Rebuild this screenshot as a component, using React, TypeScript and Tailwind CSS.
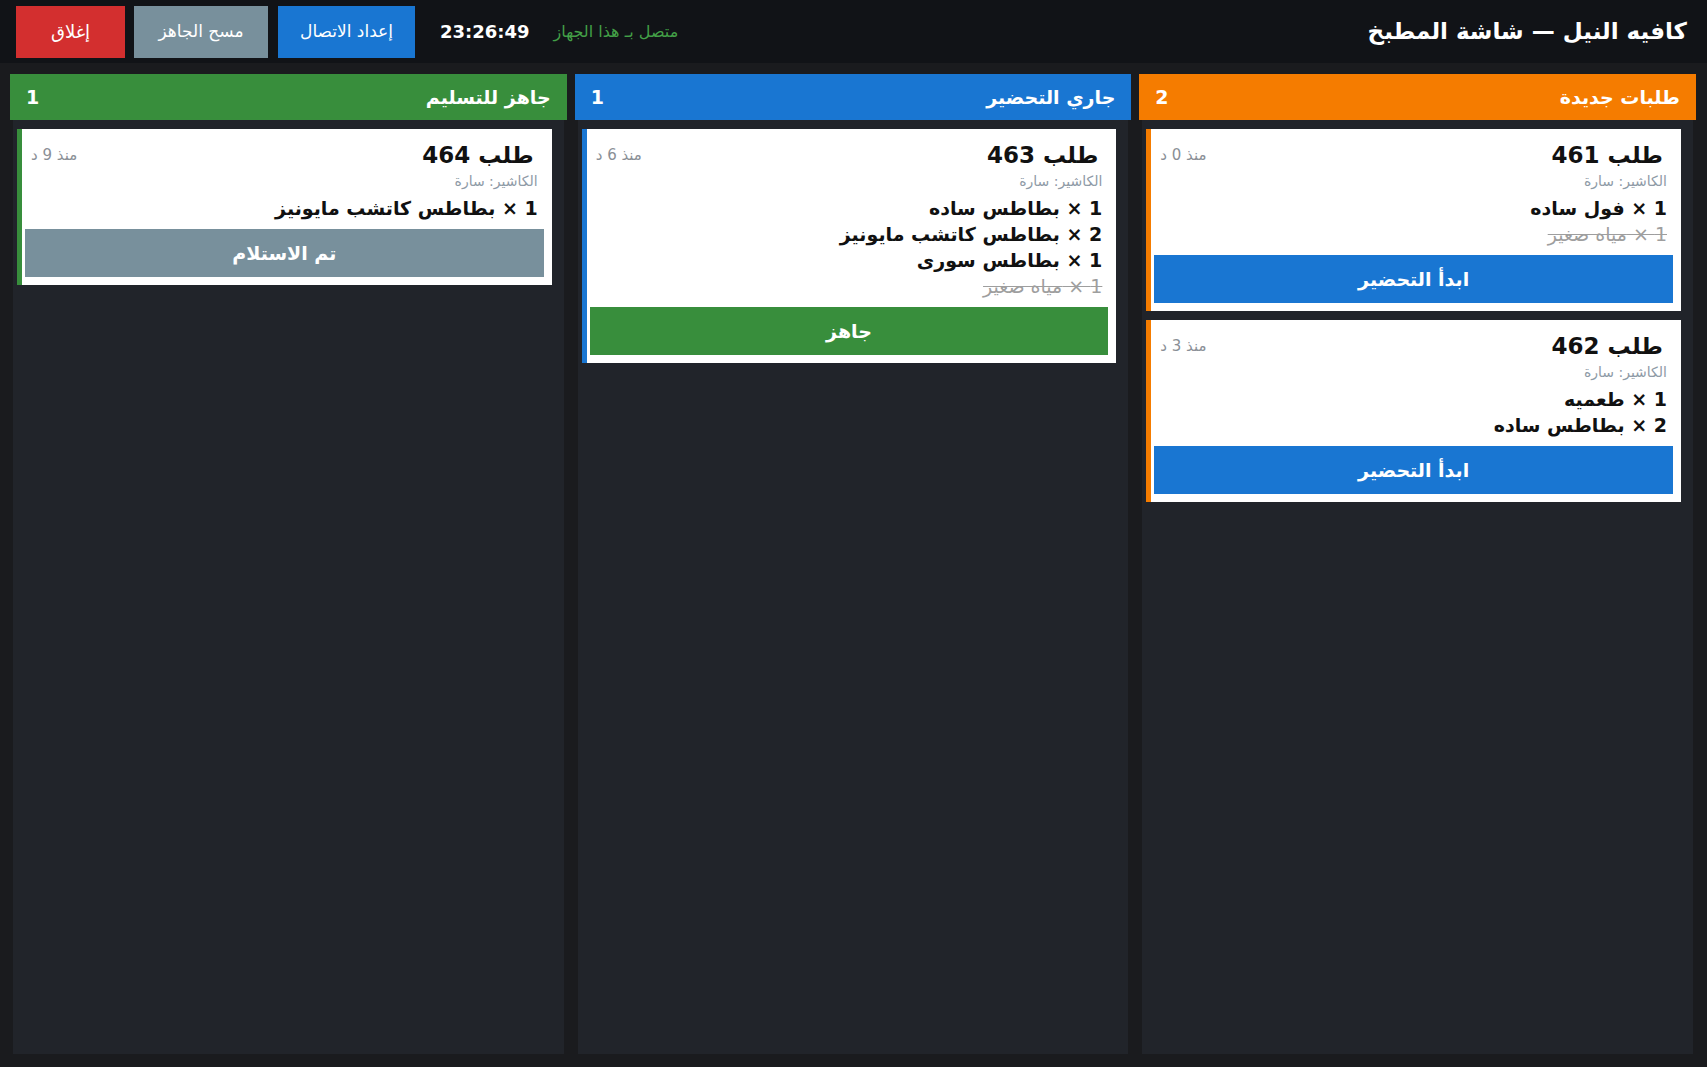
import React from 'react';

type Item = { qty: number; name: string; done?: boolean };
type Order = { no: number; mins: number; cashier: string; items: Item[] };

const columns = [
  {
    title: 'طلبات جديدة',
    bar: 'bg-[#f57c00]',
    edge: 'border-[#f57c00]',
    action: 'ابدأ التحضير',
    btn: 'bg-[#1976d2]',
    orders: [
      {
        no: 461,
        mins: 0,
        cashier: 'سارة',
        items: [
          { qty: 1, name: 'فول ساده' },
          { qty: 1, name: 'مياه صغير', done: true },
        ],
      },
      {
        no: 462,
        mins: 3,
        cashier: 'سارة',
        items: [
          { qty: 1, name: 'طعميه' },
          { qty: 2, name: 'بطاطس ساده' },
        ],
      },
    ] as Order[],
  },
  {
    title: 'جاري التحضير',
    bar: 'bg-[#1976d2]',
    edge: 'border-[#1976d2]',
    action: 'جاهز',
    btn: 'bg-[#388e3c]',
    orders: [
      {
        no: 463,
        mins: 6,
        cashier: 'سارة',
        items: [
          { qty: 1, name: 'بطاطس ساده' },
          { qty: 2, name: 'بطاطس كاتشب مايونيز' },
          { qty: 1, name: 'بطاطس سورى' },
          { qty: 1, name: 'مياه صغير', done: true },
        ],
      },
    ] as Order[],
  },
  {
    title: 'جاهز للتسليم',
    bar: 'bg-[#388e3c]',
    edge: 'border-[#388e3c]',
    action: 'تم الاستلام',
    btn: 'bg-[#78909c]',
    orders: [
      {
        no: 464,
        mins: 9,
        cashier: 'سارة',
        items: [{ qty: 1, name: 'بطاطس كاتشب مايونيز' }],
      },
    ] as Order[],
  },
];

const OrderCard = ({ order, edge, action, btn }: any) => (
  <div className={`bg-white border-l-[5px] ${edge} pt-2 pb-2 pr-2 pl-[3px]`}>
    <div className="px-[6px]">
      <div className="flex items-center justify-between mt-[2px]">
        <div className="text-[23px] leading-[32px] font-bold text-[#111] pr-1">
          طلب {order.no}
        </div>
        <div className="text-[15px] text-[#8a8f96]">منذ {order.mins} د</div>
      </div>
      <div className="text-[14px] leading-[20px] text-[#8e9aa6]">
        الكاشير: {order.cashier}
      </div>
      <div className="mt-1">
        {order.items.map((it: Item, i: number) => (
          <div
            key={i}
            className={
              it.done
                ? 'text-[19px] leading-[26px] text-[#9e9e9e] line-through'
                : 'text-[19px] leading-[26px] font-bold text-[#111]'
            }
          >
            {it.qty} × {it.name}
          </div>
        ))}
      </div>
    </div>
    <button
      type="button"
      className={`${btn} mt-2 w-full h-[48px] text-white text-[19px] font-bold`}
    >
      {action}
    </button>
  </div>
);

export default function App() {
  return (
    <div
      dir="rtl"
      className="h-screen flex flex-col bg-[#1a1b1e] text-white overflow-hidden"
      style={{ fontFamily: '"DejaVu Sans", sans-serif' }}
    >
      <header className="h-[63px] shrink-0 bg-[#111317] flex items-center justify-between pr-5 pl-4">
        <h1 className="text-[23px] font-bold">كافيه النيل — شاشة المطبخ</h1>
        <div className="flex items-center">
          <span className="text-[16px] text-[#43a047] ml-[24px]">متصل بـ هذا الجهاز</span>
          <span className="text-[18px] font-bold ml-[25px]" dir="ltr">
            23:26:49
          </span>
          <button type="button" className="h-[52px] w-[137px] bg-[#1976d2] text-[17px] ml-[10px]">
            إعداد الاتصال
          </button>
          <button type="button" className="h-[52px] w-[134px] bg-[#78909c] text-[17px] ml-[9px]">
            مسح الجاهز
          </button>
          <button type="button" className="h-[52px] w-[109px] bg-[#d32f2f] text-[18px]">
            إغلاق
          </button>
        </div>
      </header>

      <main className="flex-1 min-h-0 grid grid-cols-3 gap-2 pt-[11px] pb-[13px] pr-[11px] pl-[10px]">
        {columns.map((col) => (
          <section key={col.title} className="flex flex-col min-h-0">
            <div className={`${col.bar} h-[46px] shrink-0 flex items-center justify-between px-4`}>
              <span className="text-[19px] font-bold">{col.title}</span>
              <span className="text-[19px] font-bold">{col.orders.length}</span>
            </div>
            <div className="flex-1 mx-[3px] bg-[#21242a] pt-[9px] pr-[12px] pl-[4px] flex flex-col gap-[9px]">
              {col.orders.map((o) => (
                <OrderCard key={o.no} order={o} edge={col.edge} action={col.action} btn={col.btn} />
              ))}
            </div>
          </section>
        ))}
      </main>
    </div>
  );
}
